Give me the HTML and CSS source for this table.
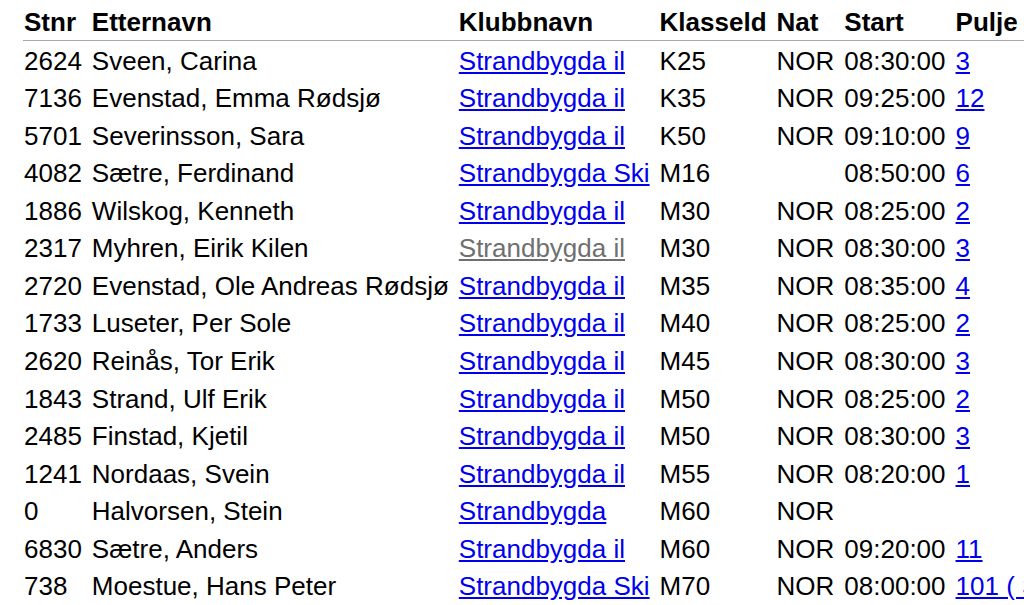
FILE: index.html
```html
<!DOCTYPE html>
<html lang="no">
<head>
<meta charset="utf-8">
<title>Startliste</title>
<link rel="stylesheet" href="styles.css">
</head>
<body>
<table class="list">
<thead>
<tr><th>Stnr</th><th>Etternavn</th><th>Klubbnavn</th><th>Klasseld</th><th>Nat</th><th>Start</th><th>Pulje</th></tr>
</thead>
<tbody>
<tr><td>2624</td><td>Sveen, Carina</td><td><a href="#">Strandbygda il</a></td><td>K25</td><td>NOR</td><td>08:30:00</td><td><a href="#">3</a></td></tr>
<tr><td>7136</td><td>Evenstad, Emma Rødsjø</td><td><a href="#">Strandbygda il</a></td><td>K35</td><td>NOR</td><td>09:25:00</td><td><a href="#">12</a></td></tr>
<tr><td>5701</td><td>Severinsson, Sara</td><td><a href="#">Strandbygda il</a></td><td>K50</td><td>NOR</td><td>09:10:00</td><td><a href="#">9</a></td></tr>
<tr><td>4082</td><td>Sætre, Ferdinand</td><td><a href="#">Strandbygda Ski</a></td><td>M16</td><td></td><td>08:50:00</td><td><a href="#">6</a></td></tr>
<tr><td>1886</td><td>Wilskog, Kenneth</td><td><a href="#">Strandbygda il</a></td><td>M30</td><td>NOR</td><td>08:25:00</td><td><a href="#">2</a></td></tr>
<tr><td>2317</td><td>Myhren, Eirik Kilen</td><td><a href="#" class="visited">Strandbygda il</a></td><td>M30</td><td>NOR</td><td>08:30:00</td><td><a href="#">3</a></td></tr>
<tr><td>2720</td><td>Evenstad, Ole Andreas Rødsjø</td><td><a href="#">Strandbygda il</a></td><td>M35</td><td>NOR</td><td>08:35:00</td><td><a href="#">4</a></td></tr>
<tr><td>1733</td><td>Luseter, Per Sole</td><td><a href="#">Strandbygda il</a></td><td>M40</td><td>NOR</td><td>08:25:00</td><td><a href="#">2</a></td></tr>
<tr><td>2620</td><td>Reinås, Tor Erik</td><td><a href="#">Strandbygda il</a></td><td>M45</td><td>NOR</td><td>08:30:00</td><td><a href="#">3</a></td></tr>
<tr><td>1843</td><td>Strand, Ulf Erik</td><td><a href="#">Strandbygda il</a></td><td>M50</td><td>NOR</td><td>08:25:00</td><td><a href="#">2</a></td></tr>
<tr><td>2485</td><td>Finstad, Kjetil</td><td><a href="#">Strandbygda il</a></td><td>M50</td><td>NOR</td><td>08:30:00</td><td><a href="#">3</a></td></tr>
<tr><td>1241</td><td>Nordaas, Svein</td><td><a href="#">Strandbygda il</a></td><td>M55</td><td>NOR</td><td>08:20:00</td><td><a href="#">1</a></td></tr>
<tr><td>0</td><td>Halvorsen, Stein</td><td><a href="#">Strandbygda</a></td><td>M60</td><td>NOR</td><td></td><td></td></tr>
<tr><td>6830</td><td>Sætre, Anders</td><td><a href="#">Strandbygda il</a></td><td>M60</td><td>NOR</td><td>09:20:00</td><td><a href="#">11</a></td></tr>
<tr><td>738</td><td>Moestue, Hans Peter</td><td><a href="#">Strandbygda Ski</a></td><td>M70</td><td>NOR</td><td>08:00:00</td><td><a href="#">101 ( Sprint )</a></td></tr>
</tbody>
</table>
</body>
</html>
```
FILE: styles.css
```css
html, body {
  margin: 0;
  padding: 0;
  background: #fff;
  overflow: hidden;
}
body {
  font-family: "Liberation Sans", Arial, sans-serif;
  font-size: 26px;
  color: #000;
}
.list {
  border-collapse: collapse;
  margin-left: 23px;
  white-space: nowrap;
}
.list th {
  text-align: left;
  font-weight: bold;
  padding: 5px 9px 0 1px;
  line-height: 35px;
  border-bottom: 1px solid #a8a8a8;
}
.list td {
  padding: 0 9px 0 1px;
  line-height: 37.57px;
  text-align: left;
}
.list tbody tr:first-child td {
  padding-top: 1.5px;
}
.list a {
  color: #0000ee;
  text-decoration: underline;
}
.list a.visited {
  color: #6f6f6f;
}
```
